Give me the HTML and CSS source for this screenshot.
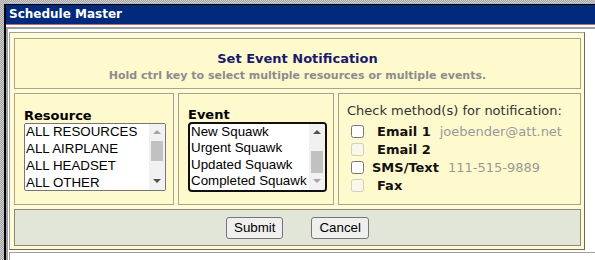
FILE: index.html
```html
<!DOCTYPE html>
<html lang="en">
<head>
  <meta charset="UTF-8">
  <meta name="viewport" content="width=device-width, initial-scale=1">
  <title>Schedule Master - Set Event Notification</title>
  <link rel="stylesheet" href="styles.css">
</head>
<body>
  <div class="window">
    <div class="titlebar">Schedule Master</div>
    <div class="content">
      <form class="panel">
        <div class="cell header">
          <h2>Set Event Notification</h2>
          <p>Hold ctrl key to select multiple resources or multiple events.</p>
        </div>

        <div class="columns">
          <div class="cell picker resource">
            <label>Resource</label>
            <div class="listbox" role="listbox" aria-multiselectable="true">
              <div class="options">
                <div class="option">ALL RESOURCES</div>
                <div class="option">ALL AIRPLANE</div>
                <div class="option">ALL HEADSET</div>
                <div class="option">ALL OTHER</div>
              </div>
              <div class="scrollbar">
                <span class="arrow up off"></span>
                <span class="track"><span class="thumb"></span></span>
                <span class="arrow down"></span>
              </div>
            </div>
          </div>

          <div class="cell picker event">
            <label>Event</label>
            <div class="listbox focused" role="listbox" aria-multiselectable="true">
              <div class="options">
                <div class="option">New Squawk</div>
                <div class="option">Urgent Squawk</div>
                <div class="option">Updated Squawk</div>
                <div class="option">Completed Squawk</div>
              </div>
              <div class="scrollbar">
                <span class="arrow up"></span>
                <span class="track"><span class="thumb"></span></span>
                <span class="arrow down off"></span>
              </div>
            </div>
          </div>

          <div class="cell methods">
            <div class="methods-title">Check method(s) for notification:</div>
            <div class="method">
              <input type="checkbox">
              <b class="name">Email 1</b>
              <span class="contact">joebender@att.net</span>
            </div>
            <div class="method">
              <input type="checkbox" disabled>
              <b class="name">Email 2</b>
            </div>
            <div class="method">
              <input type="checkbox">
              <b class="name near">SMS/Text</b>
              <span class="contact">111-515-9889</span>
            </div>
            <div class="method">
              <input type="checkbox" disabled>
              <b class="name">Fax</b>
            </div>
          </div>
        </div>

        <div class="cell actions">
          <button type="button">Submit</button>
          <button type="button">Cancel</button>
        </div>
      </form>
      <div class="next"></div>
    </div>
  </div>
</body>
</html>
```

FILE: styles.css
```css
html, body {
  height: 260px;
}
body {
  margin: 0;
  overflow: hidden;
  font-family: "DejaVu Sans", Verdana, sans-serif;
  background: repeating-conic-gradient(#a4a4a4 0 25%, #cdcdcd 0 50%) 0 0 / 2px 2px;
}
.window {
  margin: 4px 0 0 4px;
  height: 260px;
  border-top: 1px solid #000;
  border-left: 2px solid #000;
  background: #fff;
}
.titlebar {
  height: 19px;
  line-height: 19px;
  padding-left: 3px;
  background: #022a7c;
  border-bottom: 1px solid #c46a6a;
  color: #fff;
  font-size: 12px;
  font-weight: bold;
}
.content {
  margin-top: 2px;
  padding: 3px 0 0 1px;
  border-top: 2px solid #a0a0a0;
  border-left: 2px solid #a0a0a0;
}
.panel {
  width: 576px;
  box-sizing: border-box;
  display: flex;
  flex-direction: column;
  gap: 4px;
  margin: 0;
  padding: 5px 3px 3px 4px;
  border: 1px solid;
  border-color: #a0a0a0 #6e6a4e #6e6a4e #a0a0a0;
  background: #fffbd9;
}
.cell {
  box-sizing: border-box;
  border: 1px solid #aba586;
  background: #fffacd;
}
.header {
  height: 51px;
  padding-top: 12px;
  text-align: center;
}
.header h2 {
  margin: 0;
  font-size: 13px;
  line-height: 15px;
  color: #191970;
}
.header p {
  margin: 3px 0 0;
  font-size: 11px;
  line-height: 13px;
  font-weight: bold;
  color: #8c8c8c;
}
.columns {
  display: flex;
  gap: 4px;
  height: 112px;
}
.picker {
  display: flex;
  flex-direction: column;
  justify-content: center;
  padding-left: 9px;
}
.picker label {
  font-size: 13px;
  line-height: 15px;
  font-weight: bold;
  color: #000;
}
.resource {
  width: 160px;
}
.event {
  width: 156px;
}
.listbox {
  display: flex;
  width: 142px;
  height: 68px;
  box-sizing: border-box;
  overflow: hidden;
  border: 1px solid #767676;
  border-radius: 2px;
  background: #fff;
  font: 13.33px "Liberation Sans", Arial, sans-serif;
  color: #000;
}
.listbox.focused {
  width: 139px;
  height: 70px;
  border: 2px solid #101010;
  border-radius: 4px;
}
.options {
  flex: 1;
  display: flex;
  flex-direction: column;
  overflow: hidden;
}
.option {
  flex: none;
  height: 17px;
  line-height: 16px;
  padding-left: 1px;
  white-space: nowrap;
}
.focused .option {
  height: 16.5px;
  line-height: 15px;
}
.scrollbar {
  width: 16px;
  display: flex;
  flex-direction: column;
  background: #f1f1f1;
}
.arrow {
  height: 17px;
  display: flex;
  align-items: center;
  justify-content: center;
}
.arrow::before {
  content: "";
  border-left: 4px solid transparent;
  border-right: 4px solid transparent;
}
.arrow.up::before {
  border-bottom: 4px solid #505050;
}
.arrow.down::before {
  border-top: 4px solid #505050;
}
.arrow.up.off::before {
  border-bottom-color: #a3a3a3;
}
.arrow.down.off::before {
  border-top-color: #a3a3a3;
}
.track {
  flex: 1;
  display: flex;
  flex-direction: column;
  padding: 0 2px;
}
.thumb {
  height: 20px;
  background: #c1c1c1;
}
.focused .track {
  justify-content: flex-end;
}
.focused .thumb {
  height: 22px;
}
.methods {
  flex: 1;
  padding: 9px 8px 0;
  font-size: 13px;
}
.methods-title {
  line-height: 15px;
  margin-bottom: 4px;
  color: #333;
  white-space: nowrap;
}
.method {
  display: flex;
  align-items: center;
  height: 18px;
  white-space: nowrap;
}
.method input {
  width: 13px;
  height: 13px;
  margin: 0 0 0 4px;
}
.method .name {
  margin-left: 13px;
  color: #111;
}
.method .name.near {
  margin-left: 8px;
}
.contact {
  margin-left: 9px;
  color: #999;
}
.actions {
  height: 37px;
  display: flex;
  align-items: center;
  justify-content: center;
  gap: 28px;
  border-color: #8c8a70;
  background: #e1e6d9;
}
.actions button {
  height: 22px;
  padding: 1px 7px;
  border: 1px solid #767676;
  border-radius: 3px;
  background: #efefef;
  color: #000;
  font: 13.33px "Liberation Sans", Arial, sans-serif;
}
.next {
  height: 20px;
  margin-top: 2px;
  border-top: 1px solid #a0a0a0;
  border-left: 1px solid #a0a0a0;
  background: #fff;
}
```
